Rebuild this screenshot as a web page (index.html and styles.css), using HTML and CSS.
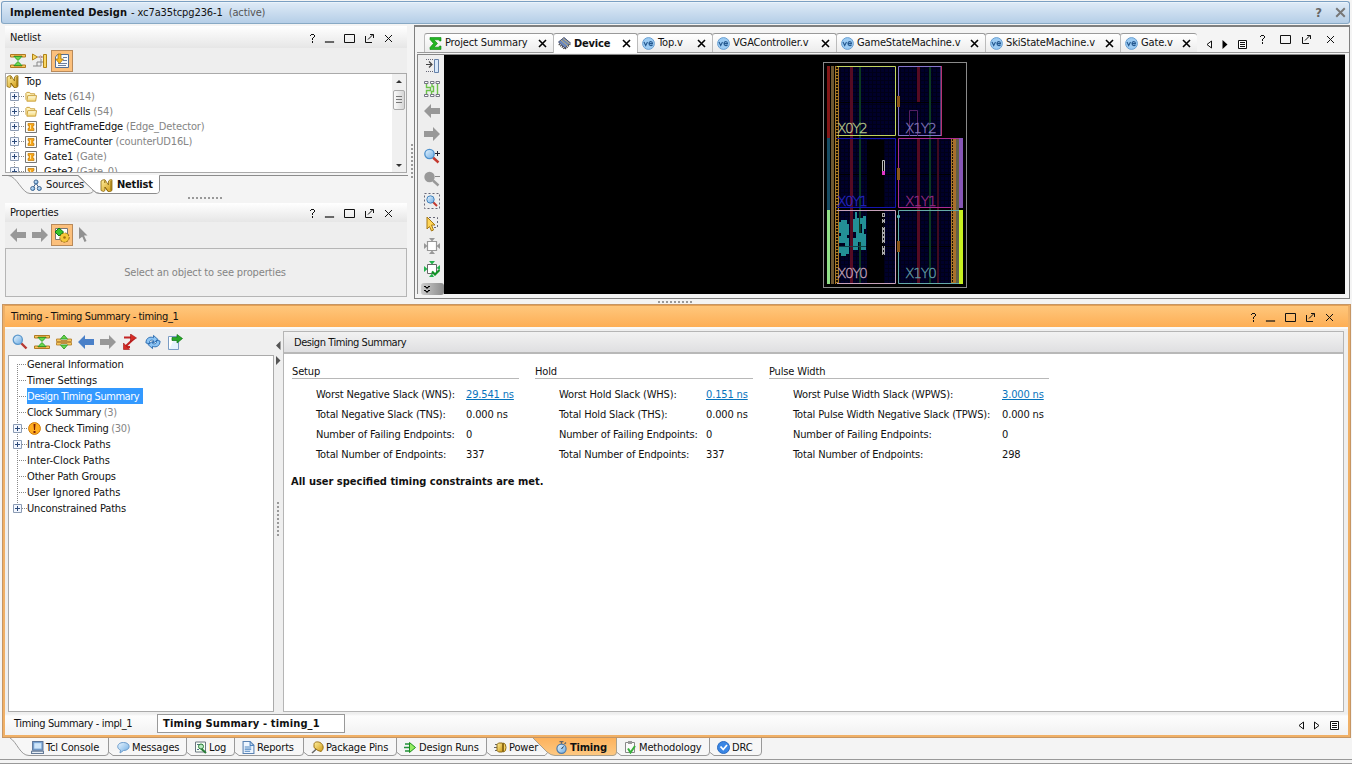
FILE: index.html
```html
<!DOCTYPE html>
<html lang="en">
<head>
<meta charset="utf-8">
<title>Implemented Design</title>
<link rel="stylesheet" href="styles.css">
</head>
<body>
<svg class="defs" width="0" height="0" aria-hidden="true">
  <defs>
    <linearGradient id="gold" x1="0" y1="0" x2="1" y2="1"><stop offset="0" stop-color="#fff0a0"/><stop offset="1" stop-color="#d09a14"/></linearGradient>
    <linearGradient id="folder" x1="0" y1="0" x2="0" y2="1"><stop offset="0" stop-color="#fffbe0"/><stop offset="1" stop-color="#f4d878"/></linearGradient>
    <linearGradient id="sky" x1="0" y1="0" x2="1" y2="1"><stop offset="0" stop-color="#eaf6ff"/><stop offset="1" stop-color="#6aaae2"/></linearGradient>
    <linearGradient id="orangeTab" x1="0" y1="0" x2="0" y2="1"><stop offset="0" stop-color="#fdb25c"/><stop offset="1" stop-color="#fdc983"/></linearGradient>
  </defs>
  <symbol id="i-help" viewBox="0 0 9 11"><path d="M2 3V2H3V1H6V2H7V4H6V5H5V7H4V5H5V4H6V2H3V3ZM4 8H5V10H4Z" fill="currentColor"/></symbol>
  <symbol id="i-min" viewBox="0 0 11 11"><path d="M1 8.500H10V9.500H1Z" fill="currentColor" stroke="currentColor" stroke-width=".2"/></symbol>
  <symbol id="i-max" viewBox="0 0 11 11"><path d="M.5 1.500H10.500V9.500H.5Z" fill="none" stroke="currentColor"/></symbol>
  <symbol id="i-float" viewBox="0 0 11 11"><path d="M1.500 3V9.500H8M4 6.500L9 1.500M6 1.500H9.500V5" fill="none" stroke="currentColor"/></symbol>
  <symbol id="i-x" viewBox="0 0 9 9"><path d="M1 1L8 8M8 1L1 8" fill="none" stroke="currentColor"/></symbol>
  <symbol id="i-xb" viewBox="0 0 9 9"><path d="M1 1L8 8M8 1L1 8" fill="none" stroke="currentColor" stroke-width="1.600"/></symbol>
  <symbol id="i-collapse" viewBox="0 0 16 16"><path d="M.5 4V1.500H15.500V4H12V3H4V4ZM.5 12V14.500H15.500V12H12V13H4V12Z" fill="#f7c85c" stroke="#b07a24"/><path d="M4 3.500H12L8 7.500ZM4 12.500H12L8 8.500Z" fill="#6ad84c" stroke="#1d8e18" stroke-width=".8"/></symbol>
  <symbol id="i-expand" viewBox="0 0 16 16"><path d="M.5 5H4L5 6.500H11L12 5H15.500V7.500H.5ZM.5 11H4L5 9.500H11L12 11H15.500V8.500H.5Z" fill="#f7c85c" stroke="#b07a24" stroke-width=".8"/><path d="M4.500 5H11.500L8 1ZM4.500 11H11.500L8 15Z" fill="#6ad84c" stroke="#1d8e18" stroke-width=".8"/></symbol>
  <symbol id="i-schem" viewBox="0 0 16 16"><path d="M.5 1L5.500 4L.5 7ZM11.500 1.500H14.500V14.500H11.500Z" fill="#f9d866" stroke="#b08318"/><path d="M5.500 4H7M9 4H11M1 13H5V9H9M9 13V6M9 9H11M5 13H9" fill="none" stroke="#888"/><circle cx="8.500" cy="4" r="1" fill="#fff" stroke="#a77"/></symbol>
  <symbol id="i-select" viewBox="0 0 16 16"><path d="M3.500 1.500H14.500V14.500H1.500V4Z" fill="#f6faff" stroke="#536d94"/><path d="M9 4.500H13M9 7.500H13M4 10.500H13M4 12.500H12" stroke="#6c7f9f"/><path d="M4 1H7V6H9.500L5.500 10.500L1.500 6H4Z" fill="#f7b925" stroke="#996408" stroke-width=".7"/></symbol>
  <symbol id="i-n" viewBox="0 0 13 13"><path d="M1 11.500V2L3 .8H5L8.500 6V2L10 .8H12V11.500L10.500 12.500H8L5 8V11.500L3.500 12.500Z" fill="url(#gold)" stroke="#8a6810" stroke-width=".8"/><path d="M4.800 1.500V4M4.800 8L8 12.300M11 2V11.500" stroke="#8d6607" fill="none"/></symbol>
  <symbol id="i-folder" viewBox="0 0 13 12"><path d="M1 9V2L2 1H5L6 2.500H10.500V4" fill="#fff3ba" stroke="#c89b35"/><path d="M3 4.500H12.500L11.500 10.500H2Z" fill="url(#folder)" stroke="#c89b35"/></symbol>
  <symbol id="i-cell" viewBox="0 0 12 12"><path d="M.5.5H11.500V11.500H.5Z" fill="#fffdf5" stroke="#777"/><path d="M3 2.500H9V4.500H8V7.500H9V9.500H3V7.500H4V4.500H3Z" fill="#f7a81b" stroke="#c37a06" stroke-width=".7"/><path d="M5.500 4V8" stroke="#ffe29b"/></symbol>
  <symbol id="i-plus" viewBox="0 0 9 9"><path d="M.5.5H8.500V8.500H.5Z" fill="#f3f7ff" stroke="#8c9cb4"/><path d="M2 4.500H7M4.500 2V7" stroke="#2c4a7a"/></symbol>
  <symbol id="i-sources" viewBox="0 0 12 12"><path d="M6 4L3 9M6 4L9 9" stroke="#38618e"/><circle cx="6" cy="3" r="2" fill="url(#sky)" stroke="#38618e"/><circle cx="2.700" cy="9.500" r="2" fill="url(#sky)" stroke="#38618e"/><circle cx="9.300" cy="9.500" r="2" fill="url(#sky)" stroke="#38618e"/></symbol>
  <symbol id="i-left" viewBox="0 0 16 14"><path d="M0 7L7 0V4H16V10H7V14Z" fill="currentColor"/></symbol>
  <symbol id="i-right" viewBox="0 0 16 14"><path d="M16 7L9 0V4H0V10H9V14Z" fill="currentColor"/></symbol>
  <symbol id="i-props" viewBox="0 0 16 16"><path d="M1.500 1.500H13.500V12.500H1.500Z" fill="#fff" stroke="#777"/><circle cx="10.500" cy="10.500" r="4.500" fill="url(#gold)" stroke="#8a6208" stroke-width="1.200" stroke-dasharray="2 1"/><circle cx="10.500" cy="10.500" r="4.200" fill="#f7c83a"/><circle cx="10.500" cy="10.500" r="1.300" fill="#a16f0c"/><path d="M5 1L9.500 5L5 9L1 5Z" fill="#38c32c" stroke="#0f7c12"/></symbol>
  <symbol id="i-pointer" viewBox="0 0 11 16"><path d="M1 0L9.500 8.500H6L8.500 14L6.500 15L4.300 9.700L1 12Z" fill="#919191"/></symbol>
  <symbol id="i-sigma" viewBox="0 0 13 13"><path d="M1 .5H12V4H10.500L10 2.800H5L8.500 6.500L5 10.200H10L10.500 9H12V12.500H1V10.500L4.500 6.500L1 2.500Z" fill="#22b522" stroke="#0c8413" stroke-width=".6"/></symbol>
  <symbol id="i-chip" viewBox="0 0 13 13"><path d="M1 7L7 12L12 7" fill="none" stroke="#333" stroke-width="2" stroke-dasharray="1 1"/><path d="M.5 5L6 .5L12.500 6L7 11Z" fill="#6c88bc" stroke="#4a5272"/><path d="M3 3L10 9M5 1.500L12 7" stroke="#d8bb66" stroke-width=".8"/></symbol>
  <symbol id="i-ve" viewBox="0 0 13 13"><circle cx="6.500" cy="6.500" r="5.900" fill="#9ccbf3" stroke="#6aa0d2"/><path d="M2 5L3.700 8.500L5.500 5M7 6.600H10.500C10.500 4 7 4 7 6.500C7 9 9.500 9 10.500 8" fill="none" stroke="#24588f" stroke-width="1.100"/></symbol>
  <symbol id="i-triL" viewBox="0 0 6 9"><path d="M5.500 1V8L1 4.500Z" fill="#fff" stroke="#111"/></symbol>
  <symbol id="i-triR" viewBox="0 0 6 9"><path d="M.5 1V8L5 4.500Z" fill="#fff" stroke="#111"/></symbol>
  <symbol id="i-triRb" viewBox="0 0 6 9"><path d="M.5 0V9L5.500 4.500Z" fill="#000"/></symbol>
  <symbol id="i-list" viewBox="0 0 9 9"><path d="M.5.5H8.500V8.500H.5Z" fill="#fff" stroke="#111"/><path d="M2 2.500H7M2 4.500H7M2 6.500H7" stroke="#111"/></symbol>
  <symbol id="i-dock" viewBox="0 0 16 16"><path d="M2 1.500H10M2 13.500H10" stroke="#667" stroke-dasharray="1 1"/><path d="M2 6.500H8M5 3.500L8 6.500L5 9.500" fill="none" stroke="#444" stroke-width="1.200"/><path d="M10.500 1.500H14.500V14.500H10.500Z" fill="#d9e9fb" stroke="#6581a8"/></symbol>
  <symbol id="i-route" viewBox="0 0 16 16"><path d="M2.500 3V6.500H6.500V9.500H2.500V13M8 3V5.500H9.500V10.500H7.500V13M13.500 3V13" fill="none" stroke="#6cc24a" stroke-width="1.400"/><path d="M.5.500H4V2.500H.5ZM6.500.5H10V2.500H6.500ZM12 .5H15.500V2.500H12ZM.5 13.500H4V15.500H.5ZM6.500 13.500H10V15.500H6.500ZM12 13.500H15.500V15.500H12Z" fill="#fff" stroke="#667" stroke-width=".9"/></symbol>
  <symbol id="i-mag" viewBox="0 0 16 16"><path d="M9 9L14.500 14.500" stroke="#b83a34" stroke-width="2.400"/><circle cx="5.800" cy="5.800" r="4.600" fill="url(#sky)" stroke="#5c98cc" stroke-width="1.300"/></symbol>
  <symbol id="i-zin" viewBox="0 0 16 16"><path d="M9 9.500L14.500 14.500" stroke="#c4382e" stroke-width="2.400"/><circle cx="5.500" cy="6" r="4.700" fill="url(#sky)" stroke="#4d90cc" stroke-width="1.300"/><path d="M11 5.500H16M13.500 3V8" stroke="#223"/></symbol>
  <symbol id="i-zout" viewBox="0 0 16 16"><path d="M9 9.500L14.500 14.500" stroke="#999" stroke-width="2.400"/><circle cx="5.500" cy="6" r="5.200" fill="#999"/><path d="M11 5.500H16" stroke="#888"/></symbol>
  <symbol id="i-zfit" viewBox="0 0 16 16"><path d="M.5.5H15.500V15.500H.5Z" fill="none" stroke="#667" stroke-dasharray="2 2"/><path d="M9 9L13 13" stroke="#c4382e" stroke-width="2"/><circle cx="6.500" cy="6.500" r="3.700" fill="url(#sky)" stroke="#4483bd"/></symbol>
  <symbol id="i-area" viewBox="0 0 16 16"><path d="M5 1.500H13.500V11.500H9" fill="none" stroke="#667" stroke-dasharray="2 2"/><path d="M3 1L11 9H7.500L9.500 14L7.500 15L5.500 10.500L3 13Z" fill="#ffd557" stroke="#a67813"/></symbol>
  <symbol id="i-fit" viewBox="0 0 16 16"><path d="M3.500 3.500H12.500V12.500H3.500Z" fill="#fff" stroke="currentColor" stroke-width="1.200"/><path d="M5 0H11L8 3.500ZM5 16H11L8 12.500ZM0 5V11L3.500 8ZM16 5V11L12.500 8Z" fill="currentColor"/></symbol>
  <symbol id="i-fitok" viewBox="0 0 16 16"><path d="M3.500 3.500H12.500V12.500H3.500Z" fill="#fff" stroke="#666"/><path d="M5 0H11L8 3.500ZM5 16H10L8 12.500ZM0 5V11L3.500 8ZM16 4V9L12.500 7Z" fill="#23b14c"/><path d="M8 10.500L11 13.500L15.500 9" fill="none" stroke="#109224" stroke-width="2.200"/></symbol>
  <symbol id="i-path" viewBox="0 0 16 16"><path d="M2 3.500H9M3.500 12.500L12 4.500M8 13.200H3.500" fill="none" stroke="#c42424" stroke-width="2.200"/><path d="M8.500 0L14.500 4L8.500 7.500ZM1.500 15.500V9L7.500 15.500Z" fill="#d82c26" stroke="#9c1414" stroke-width=".6"/></symbol>
  <symbol id="i-refresh" viewBox="0 0 17 16"><path d="M1 9C1 3 6 2 9 3.500V1L14 5.500L9 9V6.500C6 5 4 7 5 10ZM16 7C16 13 11 14 8 12.500V15L3 10.500L8 7.500V9.500C11 11 13 9 12 6Z" fill="#8cc4f4" stroke="#2b6cb0"/></symbol>
  <symbol id="i-export" viewBox="0 0 16 16"><path d="M1.500 2.500H11.500V15.500H1.500Z" fill="#e6f3fd" stroke="#7a9cc4"/><path d="M2 3H8L3 14H2Z" fill="#fff"/><path d="M5 3.500H10V.5L15.500 4.500L10 9V6.500H5Z" fill="#26a826" stroke="#0c7514" stroke-width=".7"/></symbol>
  <symbol id="i-warn" viewBox="0 0 13 13"><circle cx="6.500" cy="6.500" r="5.900" fill="#ffae20" stroke="#d07a08"/><path d="M5.500 2H7.500L7 8H6ZM5.500 9H7.500V11H5.500Z" fill="#7d1d00"/></symbol>
  <symbol id="i-console" viewBox="0 0 12 12"><path d="M1.500.5H11V8.500H1.500Z" fill="#7aa6d6" stroke="#5b7599"/><path d="M3 2H9.500V7H3Z" fill="#cfe6fa"/><path d="M.5 9.500H11.500V11.500H.5Z" fill="#e8eef5" stroke="#667c98"/></symbol>
  <symbol id="i-msg" viewBox="0 0 13 12"><path d="M6.500 1C14 1 14 9 6.500 9L3 11.500L3.500 8.500C-1 7 0 1 6.500 1Z" fill="url(#sky)" stroke="#6c9ccc"/></symbol>
  <symbol id="i-log" viewBox="0 0 13 12"><path d="M1.500.5H11.500V10.500H1.500Z" fill="#f5fff5" stroke="#6c7780"/><path d="M3 3H9M3 8H5" stroke="#56728a"/><path d="M7 7L12 11.500" stroke="#287e37" stroke-width="2"/><circle cx="7" cy="5" r="2.500" fill="#b9e8c1" stroke="#287e37"/></symbol>
  <symbol id="i-report" viewBox="0 0 11 12"><path d="M.5.5H7L10.500 4V11.500H.5Z" fill="#eef6ff" stroke="#5b83b2"/><path d="M7 .5V4H10.500M2 5.500H8M2 7.500H8M2 9.500H7" fill="none" stroke="#4b83c0"/></symbol>
  <symbol id="i-pin" viewBox="0 0 13 12"><path d="M6 7L1 11.500" stroke="#666" stroke-width="1.500"/><path d="M3 3C3 0 7 0 9 1C13 3 13 8 10 10L7 9L3 6Z" fill="url(#gold)" stroke="#9b7010"/></symbol>
  <symbol id="i-runs" viewBox="0 0 13 12"><path d="M1 2.500H6M0 6H6M1 9.500H6" stroke="#23903b" stroke-width="1.300"/><path d="M5.500 1L11.500 6L5.500 11Z" fill="#94ec63" stroke="#19901c"/></symbol>
  <symbol id="i-power" viewBox="0 0 13 12"><path d="M1 3H5M0 6H5M1 9H5" stroke="#666"/><path d="M4.500 1.500H8.500V10.500H4.500L3 9V3Z" fill="url(#gold)" stroke="#8e6c18"/><path d="M9.500 1.500Q12 2 12 6Q12 10 9.500 10.500Z" fill="#f6d363" stroke="#8e6c18"/></symbol>
  <symbol id="i-clock" viewBox="0 0 12 13"><path d="M4 .7H8M6 1V3M9 3L10.500 1.500" stroke="#666" stroke-width="1.300"/><circle cx="6" cy="7.700" r="4.600" fill="url(#sky)" stroke="#4c7aa8" stroke-width="1.200"/><path d="M6 8L8 5.500" stroke="#234"/></symbol>
  <symbol id="i-method" viewBox="0 0 11 13"><path d="M.5 1.500H9.500V11.500H.5Z" fill="#fafafa" stroke="#888"/><path d="M3 0H7V3H3Z" fill="#999"/><path d="M3 7.500L5.500 11.500L10 5" fill="none" stroke="#38b03b" stroke-width="2"/></symbol>
  <symbol id="i-drc" viewBox="0 0 13 13"><circle cx="6.500" cy="6.500" r="6" fill="#3a86e4" stroke="#2b6bc0"/><path d="M3.500 5.500L6.200 8.500L10 4" fill="none" stroke="#fff" stroke-width="1.800"/></symbol>
</svg>

<header class="titlebar">
  <b>Implemented Design</b><span class="dev">- xc7a35tcpg236-1</span><span class="active">(active)</span>
  <span class="title-help">?</span><svg class="title-x"><use href="#i-xb"/></svg>
</header>

<section class="top">
  <div class="left">
    <div class="panel-head"><span>Netlist</span>
      <div class="winbtns"><svg class="q"><use href="#i-help"/></svg><svg><use href="#i-min"/></svg><svg><use href="#i-max"/></svg><svg><use href="#i-float"/></svg><svg class="x"><use href="#i-x"/></svg></div>
    </div>
    <div class="tools">
      <svg class="i16"><use href="#i-collapse"/></svg><svg class="i16 gap6"><use href="#i-schem"/></svg><span class="pressed"><svg class="i16"><use href="#i-select"/></svg></span>
    </div>
    <div class="netlist">
      <div class="tree">
        <div class="row root"><svg class="i13"><use href="#i-n"/></svg><span>Top</span></div>
        <div class="row"><svg class="pl"><use href="#i-plus"/></svg><i class="dots"></i><svg class="ico"><use href="#i-folder"/></svg><span>Nets <em>(614)</em></span></div>
        <div class="row"><svg class="pl"><use href="#i-plus"/></svg><i class="dots"></i><svg class="ico"><use href="#i-folder"/></svg><span>Leaf Cells <em>(54)</em></span></div>
        <div class="row"><svg class="pl"><use href="#i-plus"/></svg><i class="dots"></i><svg class="ico"><use href="#i-cell"/></svg><span>EightFrameEdge <em>(Edge_Detector)</em></span></div>
        <div class="row"><svg class="pl"><use href="#i-plus"/></svg><i class="dots"></i><svg class="ico"><use href="#i-cell"/></svg><span>FrameCounter <em>(counterUD16L)</em></span></div>
        <div class="row"><svg class="pl"><use href="#i-plus"/></svg><i class="dots"></i><svg class="ico"><use href="#i-cell"/></svg><span>Gate1 <em>(Gate)</em></span></div>
        <div class="row"><svg class="pl"><use href="#i-plus"/></svg><i class="dots"></i><svg class="ico"><use href="#i-cell"/></svg><span>Gate2 <em>(Gate_0)</em></span></div>
      </div>
      <div class="scroll"><i class="up"></i><i class="thumb"></i><i class="down"></i></div>
    </div>
    <div class="ltabs">
      <svg class="tabart" width="406" height="20"><path d="M6 .5C15 1 20 18.500 28 18.500H86Q92 18 91 15" fill="#f6f6f6" stroke="#999"/><path d="M0 .5H76L91 15Q94 18.500 98 18.500H154Q157.500 18.500 157.500 15V.5H406" fill="none" stroke="#8c8c8c"/><path d="M77 0L91 15Q94 18 98 18H154Q157 18 157 15V0Z" fill="#fff"/><path d="M76 .5L91 15Q94 18.500 98 18.500" fill="none" stroke="#999"/></svg>
      <div class="ltab sources"><svg class="i12"><use href="#i-sources"/></svg>Sources</div>
      <div class="ltab net"><svg class="i13"><use href="#i-n"/></svg><b>Netlist</b></div>
    </div>
    <i class="grip"></i>
    <div class="panel-head prop"><span>Properties</span>
      <div class="winbtns"><svg class="q"><use href="#i-help"/></svg><svg><use href="#i-min"/></svg><svg><use href="#i-max"/></svg><svg><use href="#i-float"/></svg><svg class="x"><use href="#i-x"/></svg></div>
    </div>
    <div class="tools t2">
      <svg class="arr"><use href="#i-left"/></svg><svg class="arr gap6"><use href="#i-right"/></svg><span class="pressed"><svg class="i16"><use href="#i-props"/></svg></span><svg class="ptr"><use href="#i-pointer"/></svg>
    </div>
    <div class="empty">Select an object to see properties</div>
  </div>
  <i class="vgrip"></i>
  <div class="editor">
    <div class="etabs">
      <div class="etab w1"><svg class="i13"><use href="#i-sigma"/></svg><span>Project Summary</span><svg class="cx"><use href="#i-xb"/></svg></div>
      <div class="etab w2 on"><svg class="i13"><use href="#i-chip"/></svg><b>Device</b><svg class="cx"><use href="#i-xb"/></svg></div>
      <div class="etab w3"><svg class="i13"><use href="#i-ve"/></svg><span>Top.v</span><svg class="cx"><use href="#i-xb"/></svg></div>
      <div class="etab w4"><svg class="i13"><use href="#i-ve"/></svg><span>VGAController.v</span><svg class="cx"><use href="#i-xb"/></svg></div>
      <div class="etab w5"><svg class="i13"><use href="#i-ve"/></svg><span>GameStateMachine.v</span><svg class="cx"><use href="#i-xb"/></svg></div>
      <div class="etab w6"><svg class="i13"><use href="#i-ve"/></svg><span>SkiStateMachine.v</span><svg class="cx"><use href="#i-xb"/></svg></div>
      <div class="etab w7"><svg class="i13"><use href="#i-ve"/></svg><span>Gate.v</span><svg class="cx"><use href="#i-xb"/></svg></div>
      <div class="enav"><svg class="tri"><use href="#i-triL"/></svg><svg class="tri"><use href="#i-triRb"/></svg><svg class="lst"><use href="#i-list"/></svg></div>
      <div class="winbtns ewin"><svg class="q"><use href="#i-help"/></svg><svg><use href="#i-max"/></svg><svg><use href="#i-float"/></svg><svg class="x"><use href="#i-x"/></svg></div>
    </div>
    <div class="ebody">
      <div class="rail">
        <svg class="i16"><use href="#i-dock"/></svg><svg class="i16"><use href="#i-route"/></svg><svg class="i16 gray"><use href="#i-left"/></svg><svg class="i16 gray"><use href="#i-right"/></svg><svg class="i16"><use href="#i-zin"/></svg><svg class="i16"><use href="#i-zout"/></svg><svg class="i16"><use href="#i-zfit"/></svg><svg class="i16"><use href="#i-area"/></svg><svg class="i16 gray"><use href="#i-fit"/></svg><svg class="i16"><use href="#i-fitok"/></svg>
        <div class="more"><svg width="6" height="8" viewBox="0 0 6 8"><path d="M0 0H2V1H0ZM4 0H6V1H4ZM1 1H5L3 3ZM0 4H2V5H0ZM4 4H6V5H4ZM1 5H5L3 7Z"/></svg></div>
      </div>
      <svg class="device" viewBox="444 55 901 239" width="901" height="239">
        <defs>
          <pattern id="fabric" width="4" height="4" patternUnits="userSpaceOnUse"><rect width="4" height="4" fill="#00002a"/><path d="M0 .5H4M.5 0V4" stroke="#000018"/></pattern>
          <pattern id="ladder" width="4" height="3" patternUnits="userSpaceOnUse" x="835"><rect width="4" height="3" fill="#1a1000"/><path d="M.5 0V3M3.500 0V3M0 .5H4" stroke="#a87828"/></pattern>
        </defs>
        <rect x="823.500" y="62.500" width="143" height="225" fill="none" stroke="#8a8a8a"/>
        <rect x="837" y="66" width="59" height="70" fill="url(#fabric)"/><rect x="898" y="66" width="43" height="70" fill="url(#fabric)"/>
        <rect x="837" y="138" width="59" height="70" fill="url(#fabric)"/><rect x="898" y="138" width="54" height="70" fill="url(#fabric)"/>
        <rect x="837" y="210" width="59" height="74" fill="url(#fabric)"/><rect x="898" y="210" width="54" height="74" fill="url(#fabric)"/>
        <path d="M867 140H884V208H867ZM867 211H884V283H867Z" fill="#000"/>
        <path d="M837 102.500H941M837 174.500H952M837 246.500H952" stroke="#000"/>
        <path d="M851.500 66V284" stroke="#560b22" stroke-width="3"/><path d="M938 138V284" stroke="#400a20" stroke-width="2"/><path d="M918.500 66V102M918.500 138V284" stroke="#560b22" stroke-width="3"/>
        <path d="M860 66V284M930 66V284" stroke="#0b3a20" stroke-width="2"/>
        <path d="M827 66H830V138H827Z" fill="#841717"/><path d="M827 138H830V210H827Z" fill="#164c63"/><path d="M827 210H830V284H827Z" fill="#90df87"/>
        <path d="M831 66H834V284H831Z" fill="#6e5731"/><rect x="835" y="66" width="4" height="218" fill="url(#ladder)"/>
        <rect x="951" y="138" width="4" height="146" fill="url(#ladder)"/><path d="M953 138H956V284H953Z" fill="#a8702c"/><path d="M956 138H959V284H956Z" fill="#626047"/>
        <path d="M959 138H963V208H959Z" fill="#8656b5"/><path d="M959 210H963V284H959Z" fill="#c7f020"/>
        <g fill="none"><path d="M837 66.500H895.500V135.500H837" stroke="#c2d460"/><path d="M898.500 136V66.500H941V135.500H898" stroke="#8575c9"/><path d="M941.500 66V136" stroke="#b73274"/><path d="M837 138.500H895.500V207.500H837" stroke="#1515b0"/><path d="M959 138.500H898.500V207.500H952" stroke="#ae2c91"/><path d="M837 210.500H895.500V283.500H837" stroke="#c7a2ba"/><path d="M959 210.500H898.500V283.500H959" stroke="#66aaa8"/><path d="M909.500 136V110.500H917.500V136" stroke="#542065"/></g>
        <path d="M897 96H900V107H897ZM897 168H900V180H897ZM897 241H900V252H897Z" fill="#8b5518"/><path d="M897.500 215.500H899.500V217.500H897.500Z" fill="none" stroke="#5bb"/>
        <path d="M882.500 172V160.500H884.500V172" fill="none" stroke="#bbb"/><path d="M882 171H885V175H882Z" fill="#e035c8"/>
        <path d="M839 222H841V220H847V224H849V235H847V238H849V254H846V256H841V253H839V246H845V243H839V236H841V233H839ZM853 219H855V212H857V218H859V233H862V224H860V218H863V216H866V229H864V234H866V250H861V242H858V250H853V238H856V232H853Z" fill="#238f96"/>
        <path d="M839 246.500H866" stroke="#0e4248"/>
        <path d="M883.500 213V217M883.500 219V223M883.500 227V243M883.500 246V255" stroke="#aaa" stroke-width="3"/><path d="M883.500 214V255" stroke="#111" stroke-dasharray="2 2"/>
        <g class="region">
          <text x="837" y="133" textLength="31" fill="#b8c98c" stroke="#b8c98c">X0Y2</text><text x="905" y="133" textLength="32" fill="#8277ba" stroke="#8277ba">X1Y2</text>
          <text x="837" y="206" textLength="31" fill="#2626c4" stroke="#2626c4">X0Y1</text><text x="905" y="206" textLength="32" fill="#9a2c85" stroke="#9a2c85">X1Y1</text>
          <text x="837" y="278" textLength="31" fill="#c4a5ba" stroke="#c4a5ba">X0Y0</text><text x="905" y="278" textLength="32" fill="#639fa6" stroke="#639fa6">X1Y0</text>
        </g>
      </svg>
    </div>
  </div>
</section>
<i class="grip mid"></i>

<section class="timing">
  <div class="thead"><span class="ttitle">Timing - Timing Summary - timing_1</span>
    <div class="winbtns"><svg class="q"><use href="#i-help"/></svg><svg><use href="#i-min"/></svg><svg><use href="#i-max"/></svg><svg><use href="#i-float"/></svg><svg class="x"><use href="#i-x"/></svg></div>
  </div>
  <div class="tbody">
    <div class="tleft">
      <div class="ttools"><svg class="i16"><use href="#i-mag"/></svg><svg class="i16"><use href="#i-collapse"/></svg><svg class="i16"><use href="#i-expand"/></svg><svg class="i16 blue"><use href="#i-left"/></svg><svg class="i16 gray"><use href="#i-right"/></svg><svg class="i16"><use href="#i-path"/></svg><svg class="i16"><use href="#i-refresh"/></svg><svg class="i16"><use href="#i-export"/></svg></div>
      <div class="ttree">
        <div class="trow"><i class="dots"></i><span>General Information</span></div>
        <div class="trow"><i class="dots"></i><span>Timer Settings</span></div>
        <div class="trow"><i class="dots"></i><span class="sel">Design Timing Summary</span></div>
        <div class="trow"><i class="dots"></i><span class="cs">Clock Summary <em>(3)</em></span></div>
        <div class="trow"><svg class="pl"><use href="#i-plus"/></svg><i class="dots s"></i><svg class="i13 warn"><use href="#i-warn"/></svg><span class="ct">Check Timing <em>(30)</em></span></div>
        <div class="trow"><svg class="pl"><use href="#i-plus"/></svg><i class="dots s"></i><span class="wide">Intra-Clock Paths</span></div>
        <div class="trow"><i class="dots"></i><span class="wide">Inter-Clock Paths</span></div>
        <div class="trow"><i class="dots"></i><span>Other Path Groups</span></div>
        <div class="trow"><i class="dots"></i><span class="wide">User Ignored Paths</span></div>
        <div class="trow"><svg class="pl"><use href="#i-plus"/></svg><i class="dots s"></i><span>Unconstrained Paths</span></div>
      </div>
    </div>
    <div class="split"><svg width="7" height="28" viewBox="0 0 7 28"><path d="M5.500 1V10L1 5.500ZM1 16V25L5.500 20.500Z" fill="#555"/></svg><i class="vgrip2"></i></div>
    <div class="tright">
      <div class="rhead">Design Timing Summary</div>
      <div class="groups">
        <div class="group g1"><h2>Setup</h2><dl><dt>Worst Negative Slack (WNS):</dt><dd><a>29.541 ns</a></dd><dt>Total Negative Slack (TNS):</dt><dd>0.000 ns</dd><dt>Number of Failing Endpoints:</dt><dd>0</dd><dt>Total Number of Endpoints:</dt><dd>337</dd></dl></div>
        <div class="group g2"><h2>Hold</h2><dl><dt>Worst Hold Slack (WHS):</dt><dd><a>0.151 ns</a></dd><dt>Total Hold Slack (THS):</dt><dd>0.000 ns</dd><dt>Number of Failing Endpoints:</dt><dd>0</dd><dt>Total Number of Endpoints:</dt><dd>337</dd></dl></div>
        <div class="group g3"><h2>Pulse Width</h2><dl><dt>Worst Pulse Width Slack (WPWS):</dt><dd><a>3.000 ns</a></dd><dt>Total Pulse Width Negative Slack (TPWS):</dt><dd>0.000 ns</dd><dt>Number of Failing Endpoints:</dt><dd>0</dd><dt>Total Number of Endpoints:</dt><dd>298</dd></dl></div>
      </div>
      <p class="met">All user specified timing constraints are met.</p>
    </div>
  </div>
  <div class="runs"><span class="run">Timing Summary - impl_1</span><b class="run on">Timing Summary - timing_1</b>
    <div class="rnav"><svg class="tri"><use href="#i-triL"/></svg><svg class="tri"><use href="#i-triR"/></svg><svg class="lst"><use href="#i-list"/></svg></div>
  </div>
</section>

<nav class="btabs">
  <svg class="tabart" width="1352" height="20"><g fill="#f7f7f7" stroke="#999"><path d="M10 0C17 4 20 17.500 29 17.500H105Q108.500 17.500 108.500 14V0"/><path d="M108.500 14L113 17.500H183Q186.500 17.500 186.500 14V0"/><path d="M186.500 14L191 17.500H231Q234.500 17.500 234.500 14V0"/><path d="M234.500 14L239 17.500H300Q303.500 17.500 303.500 14V0"/><path d="M303.500 14L308 17.500H393Q396.500 17.500 396.500 14V0"/><path d="M396.500 14L401 17.500H483Q486.500 17.500 486.500 14V0"/><path d="M486.500 14L491 17.500H545L548 14"/><path d="M616.500 14L621 17.500H706Q709.500 17.500 709.500 14V0"/><path d="M709.500 14L714 17.500H758Q761.500 17.500 761.500 14V0"/></g><path d="M533 0L547 14Q551 17.500 555 17.500H613Q616.500 17.500 616.500 14V0Z" fill="url(#orangeTab)"/><path d="M533 0L547 14Q551 17.500 555 17.500H613Q616.500 17.500 616.500 14V0" fill="none" stroke="#aaa08c"/></svg>
  <span class="btab b1"><svg class="i13"><use href="#i-console"/></svg>Tcl Console</span>
  <span class="btab b2"><svg class="i13"><use href="#i-msg"/></svg>Messages</span>
  <span class="btab b3"><svg class="i13"><use href="#i-log"/></svg>Log</span>
  <span class="btab b4"><svg class="i13"><use href="#i-report"/></svg>Reports</span>
  <span class="btab b5"><svg class="i13"><use href="#i-pin"/></svg>Package Pins</span>
  <span class="btab b6"><svg class="i13"><use href="#i-runs"/></svg>Design Runs</span>
  <span class="btab b7"><svg class="i13"><use href="#i-power"/></svg>Power</span>
  <span class="btab b8"><svg class="i13"><use href="#i-clock"/></svg><b>Timing</b></span>
  <span class="btab b9"><svg class="i13"><use href="#i-method"/></svg>Methodology</span>
  <span class="btab b10"><svg class="i13"><use href="#i-drc"/></svg>DRC</span>
</nav>
<footer class="status"></footer>
</body>
</html>
```
FILE: styles.css
```css
* { box-sizing: border-box; }
body { margin: 0; width: 1352px; height: 764px; overflow: hidden; background: #f4f4f4; color: #111; font: 11px/14px "DejaVu Sans Condensed", "DejaVu Sans", sans-serif; font-stretch: condensed; letter-spacing: -0.15px; white-space: nowrap; display: flex; flex-direction: column; }
b { letter-spacing: -0.2px; }
em { font-style: normal; color: #858585; }
svg { flex: none; display: block; }
.defs { position: absolute; }
i { flex: none; display: block; }
.i16 { width: 16px; height: 16px; }
.i13 { width: 13px; height: 13px; }
.i12 { width: 12px; height: 12px; }
.gray { color: #989898; }
.blue { color: #4a80c8; }

.titlebar { height: 23px; flex: none; margin: 1px 2px 0 1px; border: 1px solid #7a9fc2; border-bottom-color: #88a9c4; border-radius: 3px; background: linear-gradient(#dfebf7, #b5cee7); display: flex; align-items: center; padding: 0 3px 0 8px; box-shadow: inset 0 1px #eaf3fb; }
.titlebar b { letter-spacing: 0.08px; }
.dev { margin-left: 4px; letter-spacing: -0.1px; }
.active { margin-left: 6px; color: #555; }
.title-help { margin-left: auto; font-weight: bold; font-size: 13px; color: #666; }
.title-x { width: 11px; height: 11px; color: #777; margin-left: 13px; }

.top { height: 275px; flex: none; display: flex; padding-left: 2px; }
.left { width: 406px; display: flex; flex-direction: column; padding-left: 3px; }
.panel-head { height: 22px; margin: 2px 1px 0 0; padding: 2px 14px 0 5px; display: flex; align-items: center; background: linear-gradient(#fff, #e6e6e6); flex: none; }
.winbtns { margin-left: auto; display: flex; align-items: center; gap: 9px; color: #111; }
.winbtns svg { width: 11px; height: 11px; }
.winbtns .q { width: 9px; margin-right: -2px; }
.winbtns .x { width: 9px; height: 9px; }
.tools { height: 25px; flex: none; display: flex; align-items: center; padding-left: 5px; background: #eee; margin-right: 1px; }
.gap6 { margin-left: 6px; }
.pressed { margin-left: 3px; width: 22px; height: 22px; border: 1px solid #b98a5a; background: #fcc07c; padding: 2px; }
.arr { width: 16px; height: 14px; color: #989898; }
.ptr { width: 11px; height: 16px; margin-left: 5px; }
.netlist { height: 100px; flex: none; margin-right: 1px; border: 1px solid #aaa; background: #fff; display: flex; overflow: hidden; }
.tree { flex: 1; background: repeating-linear-gradient(#999 0 1px, transparent 1px 2px) 8px 16px / 1px 90px no-repeat; }
.row { height: 15px; display: flex; align-items: center; padding-left: 4px; }
.row.root { padding-left: 0; gap: 6px; }
.pl { width: 9px; height: 9px; }
.dots { width: 6px; height: 1px; background: repeating-linear-gradient(90deg, #888 0 1px, transparent 1px 2px); }
.ico { width: 12px; height: 12px; margin-right: 7px; }
.scroll { width: 14px; background: #f0f0f0; display: flex; flex-direction: column; align-items: center; padding: 6px 0 5px; }
.up, .down { border: 3px solid transparent; border-top: 0; border-bottom: 3px solid #333; width: 6px; }
.down { border-bottom: 0; border-top: 3px solid #333; margin-top: auto; }
.thumb { width: 12px; height: 20px; margin-top: 7px; border: 1px solid #aaa; border-radius: 2px; background: repeating-linear-gradient(#777 0 1px, transparent 1px 3px) 2px 5px / 6px 9px no-repeat, linear-gradient(90deg, #fafafa, #d6d6d6); }
.ltabs { height: 20px; flex: none; margin: 2px 0 0 -3px; position: relative; display: flex; }
.tabart { position: absolute; left: 0; top: 0; }
.ltab { position: relative; display: flex; align-items: center; gap: 4px; height: 20px; }
.sources { margin-left: 28px; width: 70px; }
.grip { width: 35px; height: 2px; margin: 2px 0 0 183px; background: repeating-linear-gradient(90deg, #999 0 2px, transparent 2px 4px); }
.prop { height: 19px; margin-top: 4px; padding-top: 1px; }
.t2 { height: 26px; }
.empty { height: 49px; margin-right: 1px; padding-right: 2px; border: 1px solid #b5b5b5; background: #efefef; color: #858585; text-align: center; line-height: 47px; }
.vgrip { width: 2px; height: 36px; margin: 120px 1px 0 3px; background: repeating-linear-gradient(#999 0 2px, transparent 2px 4px); }
.editor { width: 936px; margin-top: 1px; border: 1px solid #7f7f7f; border-top-width: 2px; background: #f4f4f4; display: flex; flex-direction: column; }
.etabs { height: 26px; flex: none; display: flex; align-items: flex-end; padding-left: 7px; border-bottom: 1px solid #999; margin-left: 2px; }
.etab { height: 19px; flex: none; border: 1px solid #999; border-bottom: 0; border-left-color: #bbb; border-radius: 3px 3px 0 0; background: linear-gradient(#fff, #ececec); display: flex; align-items: center; gap: 3px; padding: 0 6px 0 4px; margin-right: -1px; }
.etab.on { background: #fff; height: 20px; margin-bottom: -1px; }
.cx { width: 9px; height: 9px; margin-left: auto; color: #000; }
.w1 { width: 130px; } .w2 { width: 85px; } .w3 { width: 76px; } .w4 { width: 125px; } .w5 { width: 150px; } .w6 { width: 136px; } .w7 { width: 77px; border-right: 0; }
.enav { display: flex; gap: 10px; align-items: center; margin: 0 0 3px 10px; }
.tri { width: 6px; height: 9px; }
.lst { width: 9px; height: 9px; }
.ewin { margin: 0 14px 7px auto; }
.ewin svg { margin-left: 1px; }
.ewin svg + svg + svg + svg { margin-left: 5px; }
.ewin .q { margin-right: 3px; }
.ebody { display: flex; margin: 1px 4px 0 2px; border-top: 1px solid #888; border-left: 1px solid #888; height: 240px; background: #fff; }
.rail { width: 26px; flex: none; background: #eee; display: flex; flex-direction: column; align-items: center; gap: 6.5px; padding: 3px 0 0 2px; }
.more { width: 23px; height: 12px; margin-top: 0; background: linear-gradient(90deg, #ccc, #8b8b8b); border-radius: 3px; padding: 3px; }
.device { background: #000; }
.region { font: 14px "DejaVu Sans", sans-serif; font-weight: 200; letter-spacing: 0; stroke-width: .3px; }
.mid { margin: 2px 0 0 658px; }

.timing { height: 434px; flex: none; margin: 1px 1px 0 2px; border: 3px solid #f0b066; border-top: 2px solid #e5a155; outline: 1px solid #c69664; outline-offset: -1px; background: #efefef; display: flex; flex-direction: column; }
.thead { height: 21px; flex: none; background: linear-gradient(#ffc77c, #fdae55); display: flex; align-items: center; padding: 1px 14px 0 6px; }
.ttitle { letter-spacing: -0.38px; }
.tbody { flex: none; height: 385px; display: flex; border-top: 2px solid #fafafa; padding-top: 2px; }
.tleft { width: 269px; padding-left: 3px; display: flex; flex-direction: column; }
.ttools { height: 24px; padding-left: 4px; padding-top: 3px; display: flex; gap: 6.100px; }
.ttree { flex: 1; background: repeating-linear-gradient(#888 0 1px, transparent 1px 2px) 8px 8px / 1px 145px no-repeat, #fff; border: 1px solid #aaa; }
.trow { height: 16px; display: flex; align-items: center; padding-left: 4px; }
.trow span { line-height: 14px; padding-top: 1px; }
.trow .dots { width: 10px; margin-left: 4px; }
.trow .dots.s { width: 5px; margin-left: 0; }
.trow .warn { margin: 0 4px 0 1px; }
.trow .sel { background: #3399ff; color: #fff; line-height: 15px; padding-right: 4px; letter-spacing: -0.45px; }
.cs { letter-spacing: -0.3px; }
.ct { letter-spacing: -0.3px; }
.wide { letter-spacing: 0; }
.split { width: 9px; padding: 9px 0 0 1px; }
.vgrip2 { width: 2px; height: 36px; margin: 134px 0 0 2px; background: repeating-linear-gradient(#999 0 2px, transparent 2px 4px); }
.tright { width: 1061px; border: 1px solid #b5b5b5; background: #fff; }
.rhead { height: 22px; border-bottom: 2px solid #b8b8b8; background: linear-gradient(#f2f2f2, #dfdfe1); padding-left: 10px; line-height: 21px; letter-spacing: -0.45px; }
.groups { display: flex; gap: 16px; padding: 10px 0 0 8px; }
.g1 { width: 227px; } .g2 { width: 218px; } .g3 { width: 280px; }
h2 { margin: 0; padding-top: 1px; font-size: 11px; font-weight: normal; height: 15px; border-bottom: 1px solid #b8b8b8; line-height: 14px; }
dl { margin: 6px 0 0 24px; display: grid; grid-auto-rows: 20px; line-height: 20px; }
.g1 dl { grid-template-columns: 150px 1fr; } .g2 dl { grid-template-columns: 147px 1fr; } .g3 dl { grid-template-columns: 209px 1fr; }
dd { margin: 0; }
a { color: #0874bd; text-decoration: underline; }
.met { margin: 10px 0 0 7px; font-weight: bold; line-height: 14px; letter-spacing: 0; }
.runs { flex: 1; display: flex; align-items: center; background: linear-gradient(#efefef 0 2px, #fdfdfd 4px, #f2f2f2); }
.run { padding: 1px 0 0 9px; width: 152px; letter-spacing: -0.38px; }
.run.on { width: 188px; height: 19px; border: 1px solid #999; background: #fff; padding: 0 0 0 5px; line-height: 18px; letter-spacing: 0.15px; }
.rnav { margin-left: auto; display: flex; gap: 10px; padding: 3px 9px 0 0; }

.btabs { height: 20px; flex: none; position: relative; display: flex; padding: 0 0 0 31px; }
.btab { position: relative; height: 19px; display: flex; align-items: center; gap: 2px; flex: none; }
.b1 { width: 86px; } .b2 { width: 77px; } .b3 { width: 48px; } .b4 { width: 69px; } .b5 { width: 93px; } .b6 { width: 90px; } .b7 { width: 61px; } .b8 { width: 69px; } .b9 { width: 93px; }
.status { height: 6px; border-top: 1px solid #999; border-bottom: 1px solid #999; margin-top: 1px; }
```
